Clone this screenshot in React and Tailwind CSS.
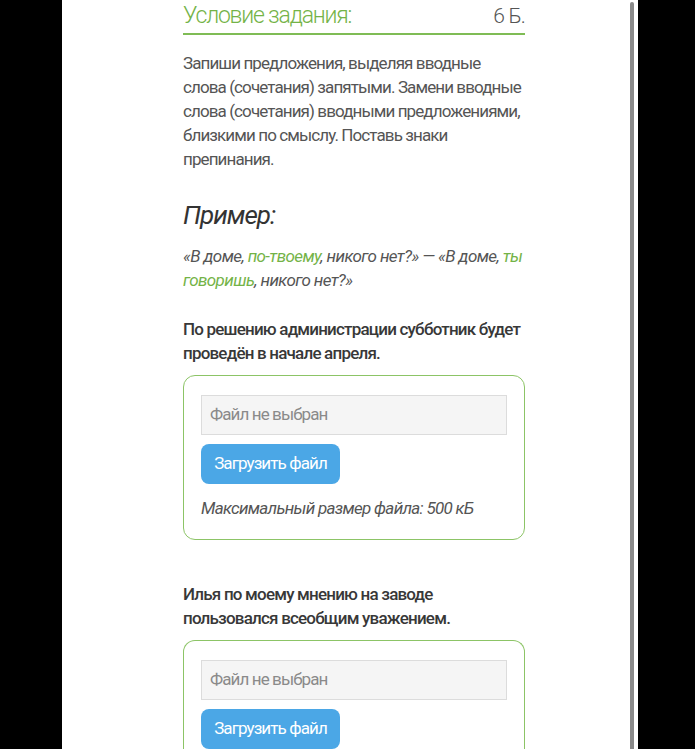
import React from "react";

const font = { fontFamily: "Roboto, 'Noto Sans', sans-serif" };

function UploadBox() {
  return (
    <div className="mt-[10px] rounded-[12px] border border-[#8cc466] px-[17px] pt-[19px] pb-[19px]">
      <div className="h-[40px] border border-[#dcdcdc] bg-[#f5f5f5] flex items-center pl-[8px] text-[17px] tracking-[-0.9px] text-[#8a8a8a]">
        Файл не выбран
      </div>
      <button className="mt-[9px] h-[40px] w-[139px] rounded-[8px] bg-[#4ba7e6] text-white text-[17px] tracking-[-0.9px] flex items-center justify-center">
        Загрузить файл
      </button>
      <div className="mt-[12px] text-[17px] italic tracking-[-0.7px] text-[#555] leading-[24px]">
        Максимальный размер файла: 500 кБ
      </div>
    </div>
  );
}

function UploadBoxPartial() {
  return (
    <div className="mt-[10px] rounded-t-[12px] border border-b-0 border-[#8cc466] px-[17px] pt-[19px] h-[200px]">
      <div className="h-[40px] border border-[#dcdcdc] bg-[#f5f5f5] flex items-center pl-[8px] text-[17px] tracking-[-0.9px] text-[#8a8a8a]">
        Файл не выбран
      </div>
      <button className="mt-[9px] h-[40px] w-[139px] rounded-[8px] bg-[#4ba7e6] text-white text-[17px] tracking-[-0.9px] flex items-center justify-center">
        Загрузить файл
      </button>
    </div>
  );
}

export default function App() {
  return (
    <div className="w-[695px] h-[749px] bg-black flex overflow-hidden" style={font}>
      <div className="w-[62px] shrink-0 bg-black" />
      <div className="w-[576px] shrink-0 bg-white relative overflow-hidden">
        <div className="absolute right-[4px] top-[2px] bottom-0 w-[4px] bg-[#8a8a8a] rounded-t-[2px]" />
        <div className="ml-[121px] w-[342px]">
          <div className="flex items-end justify-between pt-[2px] pb-[3px] border-b-2 border-[#7fbc55]">
            <span className="text-[23px] font-light tracking-[-1.2px] text-[#74b347] leading-[28px]">Условие задания:</span>
            <span className="text-[21px] font-light tracking-[-0.8px] text-[#555] leading-[28px]">6 Б.</span>
          </div>
          <p className="mt-[16px] text-[17px] leading-[24px] tracking-[-0.9px] text-[#555]">
            Запиши предложения, выделяя вводные слова (сочетания) запятыми. Замени вводные слова (сочетания) вводными предложениями, близкими по смыслу. Поставь знаки препинания.
          </p>
          <div className="mt-[28px] text-[26px] italic text-[#333] leading-[32px] tracking-[-1px]">Пример:</div>
          <p className="mt-[13px] text-[17px] italic leading-[24px] tracking-[-0.6px] text-[#555]">
            «В доме, <span className="text-[#74b347]">по-твоему</span>, никого нет?» — «В доме, <span className="text-[#74b347]">ты говоришь</span>, никого нет?»
          </p>
          <p className="mt-[25px] text-[17px] font-medium leading-[24px] tracking-[-0.8px] text-[#383838]">
            По решению администрации субботник будет проведён в начале апреля.
          </p>
          <UploadBox />
          <p className="mt-[42px] text-[17px] font-medium leading-[24px] tracking-[-0.8px] text-[#383838]">
            Илья по моему мнению на заводе пользовался всеобщим уважением.
          </p>
          <UploadBoxPartial />
        </div>
      </div>
      <div className="flex-1 bg-black" />
    </div>
  );
}
